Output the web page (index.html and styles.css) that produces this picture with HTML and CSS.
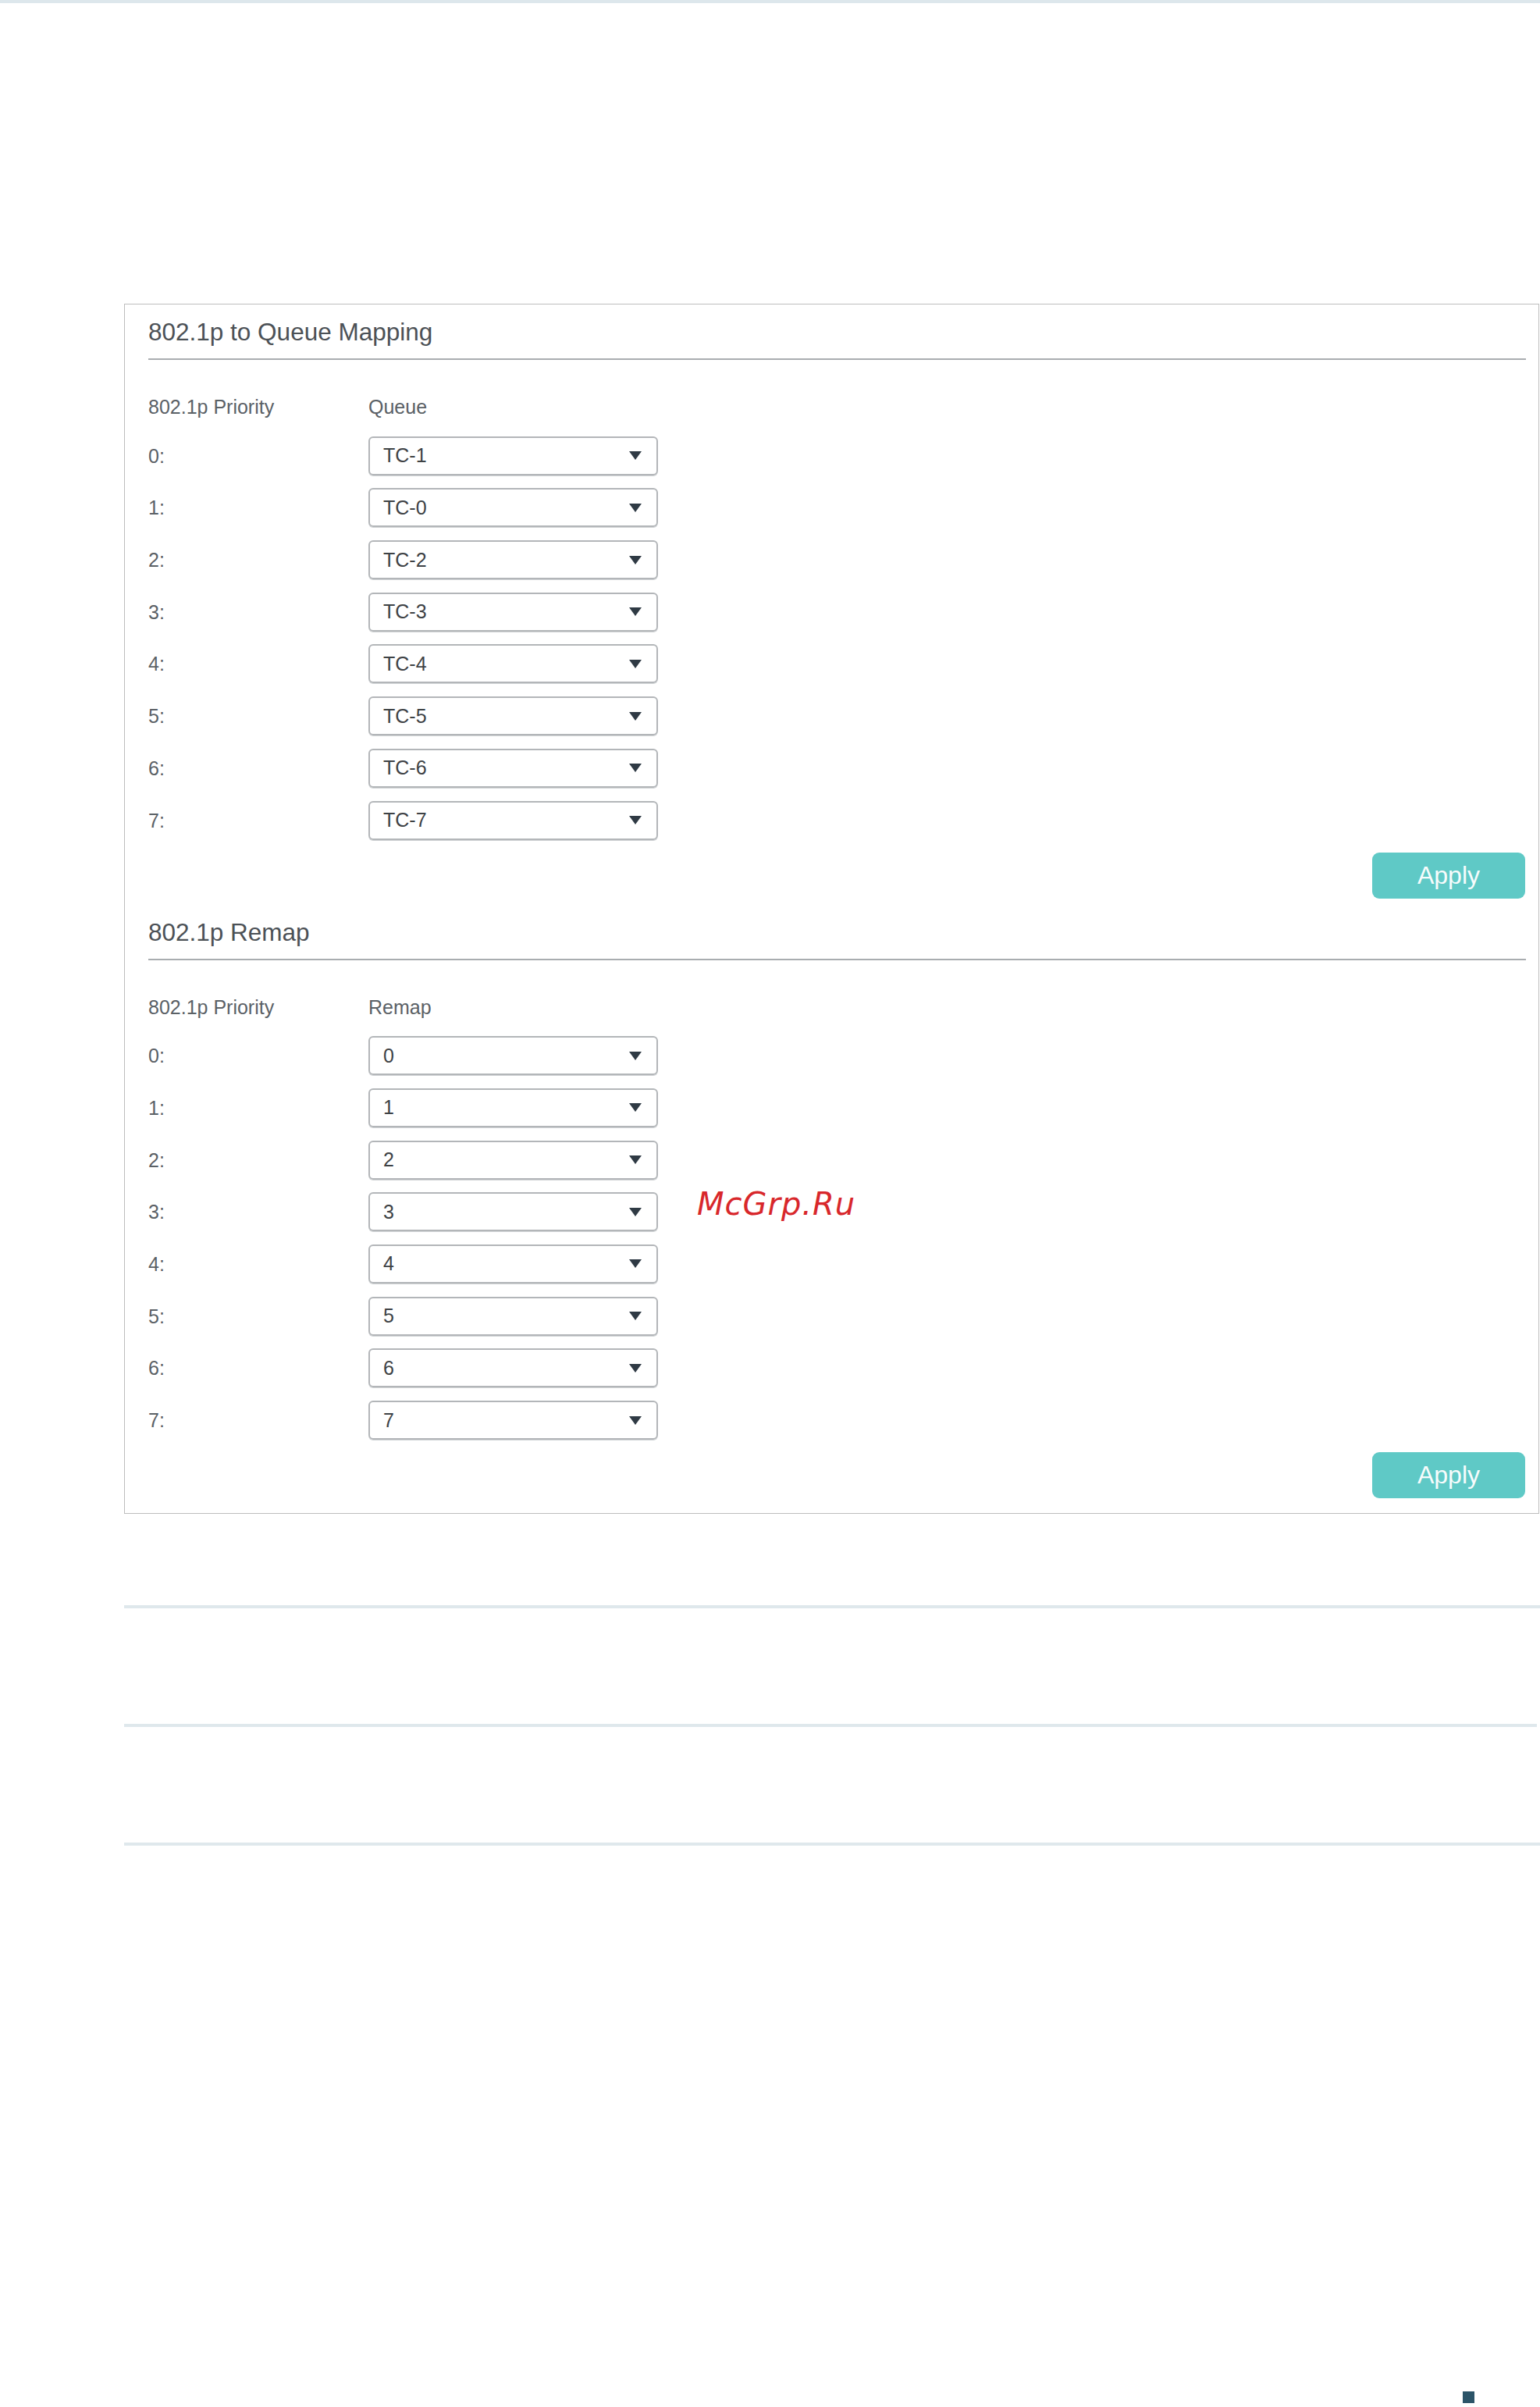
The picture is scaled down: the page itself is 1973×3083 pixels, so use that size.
FILE: index.html
```html
<!DOCTYPE html>
<html lang="en">
<head>
    <meta charset="UTF-8">
    <title>802.1p to Queue Mapping</title>
    <link rel="stylesheet" href="styles.css">
</head>
<body>
    <div class="topbar"></div>

    <div class="panel">
        <div class="section">
            <h2 class="section-title">802.1p to Queue Mapping</h2>
            <div class="map-grid">
                <div class="col-head">802.1p Priority</div>
                <div class="col-head">Queue</div>

                <div class="prio">0:</div>
                <div class="select"><span>TC-1</span><svg width="16" height="11" viewBox="0 0 16 11"><polygon points="0,0 16,0 8,11"/></svg></div>
                <div class="prio">1:</div>
                <div class="select"><span>TC-0</span><svg width="16" height="11" viewBox="0 0 16 11"><polygon points="0,0 16,0 8,11"/></svg></div>
                <div class="prio">2:</div>
                <div class="select"><span>TC-2</span><svg width="16" height="11" viewBox="0 0 16 11"><polygon points="0,0 16,0 8,11"/></svg></div>
                <div class="prio">3:</div>
                <div class="select"><span>TC-3</span><svg width="16" height="11" viewBox="0 0 16 11"><polygon points="0,0 16,0 8,11"/></svg></div>
                <div class="prio">4:</div>
                <div class="select"><span>TC-4</span><svg width="16" height="11" viewBox="0 0 16 11"><polygon points="0,0 16,0 8,11"/></svg></div>
                <div class="prio">5:</div>
                <div class="select"><span>TC-5</span><svg width="16" height="11" viewBox="0 0 16 11"><polygon points="0,0 16,0 8,11"/></svg></div>
                <div class="prio">6:</div>
                <div class="select"><span>TC-6</span><svg width="16" height="11" viewBox="0 0 16 11"><polygon points="0,0 16,0 8,11"/></svg></div>
                <div class="prio">7:</div>
                <div class="select"><span>TC-7</span><svg width="16" height="11" viewBox="0 0 16 11"><polygon points="0,0 16,0 8,11"/></svg></div>
            </div>
            <div class="actions"><button class="apply">Apply</button></div>
        </div>

        <div class="section">
            <h2 class="section-title">802.1p Remap</h2>
            <div class="map-grid">
                <div class="col-head">802.1p Priority</div>
                <div class="col-head">Remap</div>

                <div class="prio">0:</div>
                <div class="select"><span>0</span><svg width="16" height="11" viewBox="0 0 16 11"><polygon points="0,0 16,0 8,11"/></svg></div>
                <div class="prio">1:</div>
                <div class="select"><span>1</span><svg width="16" height="11" viewBox="0 0 16 11"><polygon points="0,0 16,0 8,11"/></svg></div>
                <div class="prio">2:</div>
                <div class="select"><span>2</span><svg width="16" height="11" viewBox="0 0 16 11"><polygon points="0,0 16,0 8,11"/></svg></div>
                <div class="prio">3:</div>
                <div class="select"><span>3</span><svg width="16" height="11" viewBox="0 0 16 11"><polygon points="0,0 16,0 8,11"/></svg></div>
                <div class="prio">4:</div>
                <div class="select"><span>4</span><svg width="16" height="11" viewBox="0 0 16 11"><polygon points="0,0 16,0 8,11"/></svg></div>
                <div class="prio">5:</div>
                <div class="select"><span>5</span><svg width="16" height="11" viewBox="0 0 16 11"><polygon points="0,0 16,0 8,11"/></svg></div>
                <div class="prio">6:</div>
                <div class="select"><span>6</span><svg width="16" height="11" viewBox="0 0 16 11"><polygon points="0,0 16,0 8,11"/></svg></div>
                <div class="prio">7:</div>
                <div class="select"><span>7</span><svg width="16" height="11" viewBox="0 0 16 11"><polygon points="0,0 16,0 8,11"/></svg></div>
            </div>
            <div class="actions"><button class="apply">Apply</button></div>
        </div>
    </div>

    <div class="rule first"></div>
    <div class="rule short"></div>
    <div class="rule"></div>

    <div class="page-mark"></div>

    <div class="watermark">McGrp.Ru</div>
</body>
</html>
```

FILE: styles.css
```css
body {
    margin: 0;
    background: #fff;
    font-family: "Liberation Sans", Arial, sans-serif;
    position: relative;
}
.topbar {
    height: 4px;
    background: #dde7ec;
}
.panel {
    box-sizing: border-box;
    width: 1813px;
    margin: 385px 0 0 159px;
    border: 1px solid #bdbdbd;
    padding: 0 16px 19px 30px;
}
.section {
    padding-top: 17px;
}
.section + .section {
    padding-top: 25px;
}
.section-title {
    margin: 0;
    font-size: 31.5px;
    line-height: 36px;
    font-weight: normal;
    color: #4c5156;
    padding-bottom: 16px;
    border-bottom: 2px solid #a9adb0;
}
.map-grid {
    display: grid;
    grid-template-columns: 282px 371px;
    row-gap: 16.7px;
    margin-top: 45px;
    align-items: center;
}
.col-head {
    font-size: 25px;
    line-height: 30px;
    color: #5b6166;
    margin-bottom: 6px;
}
.prio {
    font-size: 25px;
    line-height: 30px;
    color: #5b6166;
}
.select {
    box-sizing: border-box;
    height: 50px;
    display: flex;
    align-items: center;
    justify-content: space-between;
    padding: 0 19px 0 17px;
    border: 2px solid #b3b6b9;
    border-radius: 6px;
    box-shadow: 0 1px 0 #d0d3d5;
    font-size: 25px;
    color: #3e4245;
}
.select svg {
    fill: #2f3a44;
}
.actions {
    display: flex;
    justify-content: flex-end;
    margin-top: 16px;
}
.apply {
    width: 196px;
    height: 59px;
    margin-right: 1px;
    border: none;
    border-radius: 9px;
    background: #5fc9c6;
    color: #f7fcfc;
    font-family: "Liberation Sans", Arial, sans-serif;
    font-size: 32px;
    cursor: pointer;
}
.rule {
    height: 4px;
    margin: 148px 0 0 159px;
    background: #dfe8ec;
}
.rule.first {
    margin-top: 117px;
}
.rule.short {
    margin-right: 4px;
}
.page-mark {
    width: 15px;
    height: 15px;
    margin: 699px 0 0 1874px;
    background: #2c5468;
}
.watermark {
    position: absolute;
    top: 1522px;
    left: 893px;
    font-family: "DejaVu Sans", sans-serif;
    font-style: oblique;
    font-size: 40px;
    line-height: 40px;
    letter-spacing: 1px;
    color: #d8272b;
}
```
